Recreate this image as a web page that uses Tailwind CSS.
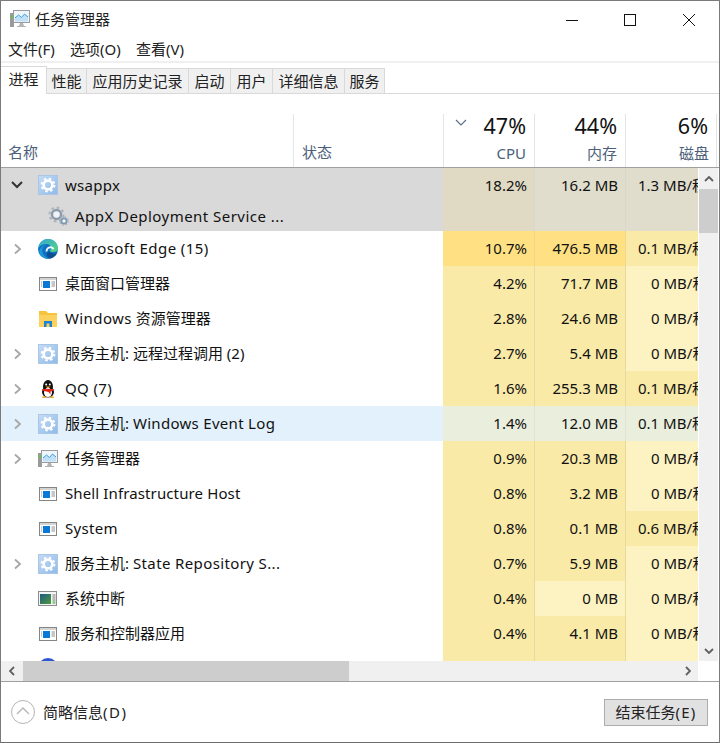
<!DOCTYPE html>
<html lang="zh-CN">
<head>
    <meta charset="UTF-8">
    <title>任务管理器</title>
    <script src="https://cdn.jsdelivr.net/npm/@tailwindcss/browser@4"></script>
</head>
<body class="bg-white">
    <svg width="0" height="0" class="absolute">
        <defs>
            <linearGradient id="tile" x1="0" y1="0" x2="1" y2="1">
                <stop offset="0" stop-color="#c5dcf5"/>
                <stop offset="1" stop-color="#8fbae8"/>
            </linearGradient>
            <linearGradient id="edge-top" x1="0" y1="0" x2="1" y2="1">
                <stop offset="0" stop-color="#2fa9d8"/>
                <stop offset="1" stop-color="#5ad67a"/>
            </linearGradient>
            <linearGradient id="irq" x1="0" y1="0" x2="1" y2="1">
                <stop offset="0" stop-color="#1d5a86"/>
                <stop offset="1" stop-color="#4f9a3c"/>
            </linearGradient>
            <symbol id="gear" viewBox="0 0 20 20">
                <rect x="0.5" y="0.5" width="19" height="19" fill="url(#tile)" stroke="#a9c6e6"/>
                <circle cx="10" cy="10" r="4.4" fill="none" stroke="#fff" stroke-width="2.6"/>
                <circle cx="10" cy="10" r="6.4" fill="none" stroke="#fff" stroke-width="2" stroke-dasharray="2.5 2.53"/>
            </symbol>
            <symbol id="window" viewBox="0 0 20 20">
                <rect x="1.5" y="3.5" width="17" height="13" fill="#fff" stroke="#858585"/>
                <rect x="2" y="4" width="16" height="2" fill="#d4d4d4"/>
                <rect x="5" y="7" width="7" height="7" fill="#0a78d7"/>
                <path d="M13.5 8h3.500M13.500 10h3.500M13.500 12h3.500M3 8h1M3 10h1M3 12h1" stroke="#8f8f8f" stroke-width="1"/>
            </symbol>
            <symbol id="irq-window" viewBox="0 0 20 20">
                <rect x="0.5" y="2.5" width="18" height="14" fill="#f4f4f4" stroke="#8c8c8c"/>
                <rect x="2" y="5" width="11" height="10" fill="url(#irq)"/>
                <path d="M14.5 6h3M14.5 8h3M14.5 10h3" stroke="#7a7a7a"/>
                <path d="M14.5 12h3M14.5 14h3" stroke="#3c9a3c"/>
            </symbol>
            <symbol id="edge" viewBox="0 0 20 20">
                <circle cx="10" cy="10" r="10" fill="#0f70c4"/>
                <path d="M0.3 9C1 4 5 0 10 0c5.5 0 10 4 10 9.5 0 2.5-2.5 3.5-5 3.5-2 0-3.3-.7-3.3-1.5 1-.8 1.300-1.500 1.300-2.500C13 6.500 11 5 8.500 5 5 5 2 6.500 0.300 9z" fill="url(#edge-top)"/>
                <path d="M9 5.500c-3 .5-4.800 3-4.800 6 0 4 3.300 7.500 7.500 8.300-4.500.5-8.500-1.500-10.200-5C.5 11 3.500 6 9 5.500z" fill="#1c9ad6"/>
                <path d="M8.500 12.500c0-2.500 1.800-4.300 4-4.300 1.600 0 2.500.8 2.800 2" fill="none" stroke="#f2fcff" stroke-width="1.900"/>
                <path d="M11.700 12.500c.2 1.300 2 2.200 4.800 2.200 1 0 1.800-.2 2.500-.6-1.300 2.700-3.500 4.500-6.500 5.500-2.200 0-4-2.600-3.500-5 .2-1 1-2 2.700-2.100z" fill="#0e4f94"/>
            </symbol>
            <symbol id="folder" viewBox="0 0 20 20">
                <path d="M1 2h7l2 2h9v14H1z" fill="#f7c23c"/>
                <path d="M1 6h18v12H1z" fill="#fbd25e"/>
                <path d="M6 18v-6h8v6h-2.500v-3.500h-3V18z" fill="#1d82d2"/>
            </symbol>
            <symbol id="qq" viewBox="0 0 20 20">
                <ellipse cx="10" cy="7.500" rx="5" ry="6.500" fill="#111"/>
                <ellipse cx="10" cy="13" rx="6" ry="5.500" fill="#111"/>
                <ellipse cx="10" cy="13.500" rx="4" ry="4.500" fill="#fff"/>
                <circle cx="8.200" cy="5.500" r="1" fill="#fff"/>
                <circle cx="11.800" cy="5.500" r="1" fill="#fff"/>
                <path d="M7.500 7.500h5L10 9.500z" fill="#f5b12b"/>
                <path d="M4.500 10h11l.5 1.500-3.500 1v3L10.500 13 4 11.500z" fill="#e3261c"/>
                <path d="M4 17.500h4.500l-1 1.500H4.500zM11.500 17.500H16l-.5 1.500h-3z" fill="#f5a623"/>
            </symbol>
            <symbol id="taskmgr" viewBox="0 0 20 20">
                <rect x="0" y="4" width="4" height="14" fill="#9a9a9a"/>
                <rect x="1" y="6" width="2" height="3" fill="#5fc24a"/>
                <rect x="3.500" y="1.500" width="16" height="12" fill="#eef6fc" stroke="#9c9c9c"/>
                <path d="M5 9l3.500-3 3 2.500 3-3.500L18 8v4.500H5z" fill="#bfe0f7"/>
                <path d="M5 9l3.500-3 3 2.500 3-3.500L18 8" fill="none" stroke="#3f9fe0" stroke-width="1"/>
                <path d="M10 14h3l1 3h2v1H7v-1h2z" fill="#b4b4b4"/>
            </symbol>
            <symbol id="svc-gears" viewBox="0 0 21 20">
                <circle cx="8.500" cy="8.500" r="4.500" fill="#eef3f8" stroke="#8f9aa6" stroke-width="2.400"/>
                <circle cx="8.500" cy="8.500" r="7" fill="none" stroke="#aab4be" stroke-width="2" stroke-dasharray="2.700 2.800"/>
                <circle cx="16" cy="15" r="2.600" fill="#f2f6fa" stroke="#7f97ad" stroke-width="1.800"/>
                <circle cx="16" cy="15" r="4.200" fill="none" stroke="#9fb2c4" stroke-width="1.200" stroke-dasharray="1.600 1.700"/>
            </symbol>
            <symbol id="chev-right" viewBox="0 0 10 12">
                <path d="M2 1.500L7 6l-5 4.500" fill="none" stroke="#a6a6a6" stroke-width="1.800"/>
            </symbol>
        </defs>
    </svg>

    <div class="w-[720px] h-[743px] border border-[#7a7a7a] border-b-[#6e6e6e] flex flex-col overflow-hidden text-[15px] text-[#111] font-['Noto_Sans','Noto_Sans_CJK_SC',sans-serif] leading-none">

        <!-- title bar -->
        <div class="h-[37px] shrink-0 flex items-center">
            <svg class="w-[20px] h-[20px] ml-[9px] mt-[-1px]"><use href="#taskmgr"/></svg>
            <span class="ml-[5px] text-[#222]">任务管理器</span>
            <div class="ml-auto flex items-center">
                <svg class="w-[12px] h-[12px] mr-[46px]" viewBox="0 0 12 12"><path d="M0 6.500h12" stroke="#111"/></svg>
                <svg class="w-[12px] h-[12px] mr-[47px]" viewBox="0 0 12 12"><rect x="0.500" y="0.500" width="11" height="11" fill="none" stroke="#111"/></svg>
                <svg class="w-[12px] h-[12px] mr-[24px]" viewBox="0 0 12 12"><path d="M0 0l12 12M12 0L0 12" stroke="#111"/></svg>
            </div>
        </div>

        <!-- menu -->
        <div class="h-[23px] shrink-0 flex items-center pl-[7px] text-[#222]">
            <span class="w-[62px]">文件(F)</span>
            <span class="w-[66px]">选项(O)</span>
            <span>查看(V)</span>
        </div>
        <div class="h-[2px] shrink-0 bg-[#f0f0f0]"></div>

        <!-- tabs -->
        <div class="h-[31px] shrink-0 flex items-end border-b border-[#d9d9d9] text-[#222]">
            <div class="w-[46px] h-[28px] mb-[-1px] bg-white border-t border-r border-[#d9d9d9] flex items-center justify-center pb-[2px]">进程</div>
            <div class="w-[40px] h-[25px] bg-[#f0f0f0] border-t border-r border-[#d9d9d9] flex items-center justify-center">性能</div>
            <div class="w-[102px] h-[25px] bg-[#f0f0f0] border-t border-r border-[#d9d9d9] flex items-center justify-center">应用历史记录</div>
            <div class="w-[42px] h-[25px] bg-[#f0f0f0] border-t border-r border-[#d9d9d9] flex items-center justify-center">启动</div>
            <div class="w-[42px] h-[25px] bg-[#f0f0f0] border-t border-r border-[#d9d9d9] flex items-center justify-center">用户</div>
            <div class="w-[72px] h-[25px] bg-[#f0f0f0] border-t border-r border-[#d9d9d9] flex items-center justify-center">详细信息</div>
            <div class="w-[40px] h-[25px] bg-[#f0f0f0] border-t border-r border-[#d9d9d9] flex items-center justify-center">服务</div>
        </div>

        <!-- column headers -->
        <div class="h-[74px] shrink-0 flex items-end border-b border-[#a0a0a0] text-[#4c607a]">
            <div class="w-[293px] h-[53px] border-r border-[#e5e5e5] flex items-end pl-[7px] pb-[7px]">名称</div>
            <div class="w-[150px] h-[53px] border-r border-[#e5e5e5] flex items-end pl-[8px] pb-[7px]">状态</div>
            <div class="w-[91px] h-[53px] border-r border-[#e5e5e5] flex flex-col items-end pr-[8px] relative">
                <svg class="absolute left-[11px] top-[5px] w-[12px] h-[7px]" viewBox="0 0 12 7"><path d="M1 1l5 5 5-5" fill="none" stroke="#5c6f88" stroke-width="1.200"/></svg>
                <span class="text-[21.500px] text-[#111] mt-[1px]">47%</span>
                <span class="mt-[9px]">CPU</span>
            </div>
            <div class="w-[91px] h-[53px] border-r border-[#e5e5e5] flex flex-col items-end pr-[8px]">
                <span class="text-[21.500px] text-[#111] mt-[1px]">44%</span>
                <span class="mt-[9px]">内存</span>
            </div>
            <div class="w-[91px] h-[53px] border-r border-[#e5e5e5] flex flex-col items-end pr-[8px]">
                <span class="text-[21.500px] text-[#111] mt-[1px]">6%</span>
                <span class="mt-[9px] mr-[-1px]">磁盘</span>
            </div>
        </div>

        <!-- table + vertical scrollbar -->
        <div class="h-[493px] shrink-0 flex">
            <div class="w-[697px] overflow-hidden whitespace-nowrap">

                <!-- selected group -->
                <div class="h-[63px] flex bg-[#d9d9d9]">
                    <div class="w-[442px]">
                        <div class="h-[33px] pt-[1px] flex items-center pl-[10px]">
                            <svg class="w-[12px] h-[8px]" viewBox="0 0 12 8"><path d="M1 1l5 5 5-5" fill="none" stroke="#333" stroke-width="2"/></svg>
                            <svg class="w-[20px] h-[20px] ml-[15px]"><use href="#gear"/></svg>
                            <span class="ml-[7px] tracking-[0.3px]">wsappx</span>
                        </div>
                        <div class="h-[30px] flex items-center pl-[47px]">
                            <svg class="w-[21px] h-[20px]"><use href="#svc-gears"/></svg>
                            <span class="ml-[6px] tracking-[0.46px]">AppX Deployment Service ...</span>
                        </div>
                    </div>
                    <div class="w-[92px] bg-[#e0dac4] border-r border-[#d8d8d0] flex justify-end pr-[7px] pt-[10px]">18.2%</div>
                    <div class="w-[91px] bg-[#e0ddcd] border-r border-[#d8d8d0] flex justify-end pr-[7px] pt-[10px]">16.2 MB</div>
                    <div class="w-[72px] bg-[#e0ddcd] pl-[12px] pt-[10px] overflow-hidden">1.3 MB/秒</div>
                </div>

                <div class="h-[35px] flex">
                    <div class="w-[442px] flex items-center pl-[12px]">
                        <svg class="w-[10px] h-[12px]"><use href="#chev-right"/></svg>
                        <svg class="w-[20px] h-[20px] ml-[15px]"><use href="#edge"/></svg>
                        <span class="ml-[7px] tracking-[0.42px]">Microsoft Edge (15)</span>
                    </div>
                    <div class="w-[92px] bg-[#ffe184] border-r border-[#f0d68c] flex items-center justify-end pr-[7px]">10.7%</div>
                    <div class="w-[91px] bg-[#ffe184] border-r border-[#f0d68c] flex items-center justify-end pr-[7px]">476.5 MB</div>
                    <div class="w-[72px] bg-[#f9eaa8] flex items-center pl-[12px] overflow-hidden">0.1 MB/秒</div>
                </div>

                <div class="h-[35px] flex">
                    <div class="w-[442px] flex items-center pl-[37px]">
                        <svg class="w-[20px] h-[20px]"><use href="#window"/></svg>
                        <span class="ml-[7px]">桌面窗口管理器</span>
                    </div>
                    <div class="w-[92px] bg-[#f9eaa8] border-r border-[#e8d9a0] flex items-center justify-end pr-[7px]">4.2%</div>
                    <div class="w-[91px] bg-[#f9eaa8] border-r border-[#e8d9a0] flex items-center justify-end pr-[7px]">71.7 MB</div>
                    <div class="w-[72px] bg-[#fdf3c2] flex items-center pl-[25px] overflow-hidden">0 MB/秒</div>
                </div>

                <div class="h-[35px] flex">
                    <div class="w-[442px] flex items-center pl-[37px]">
                        <svg class="w-[20px] h-[20px]"><use href="#folder"/></svg>
                        <span class="ml-[7px]"><span class="tracking-[0.4px]">Windows</span> 资源管理器</span>
                    </div>
                    <div class="w-[92px] bg-[#f9eaa8] border-r border-[#e8d9a0] flex items-center justify-end pr-[7px]">2.8%</div>
                    <div class="w-[91px] bg-[#f9eaa8] border-r border-[#e8d9a0] flex items-center justify-end pr-[7px]">24.6 MB</div>
                    <div class="w-[72px] bg-[#fdf3c2] flex items-center pl-[25px] overflow-hidden">0 MB/秒</div>
                </div>

                <div class="h-[35px] flex">
                    <div class="w-[442px] flex items-center pl-[12px]">
                        <svg class="w-[10px] h-[12px]"><use href="#chev-right"/></svg>
                        <svg class="w-[20px] h-[20px] ml-[15px]"><use href="#gear"/></svg>
                        <span class="ml-[7px]">服务主机: 远程过程调用 (2)</span>
                    </div>
                    <div class="w-[92px] bg-[#f9eaa8] border-r border-[#e8d9a0] flex items-center justify-end pr-[7px]">2.7%</div>
                    <div class="w-[91px] bg-[#f9eaa8] border-r border-[#e8d9a0] flex items-center justify-end pr-[7px]">5.4 MB</div>
                    <div class="w-[72px] bg-[#fdf3c2] flex items-center pl-[25px] overflow-hidden">0 MB/秒</div>
                </div>

                <div class="h-[35px] flex">
                    <div class="w-[442px] flex items-center pl-[12px]">
                        <svg class="w-[10px] h-[12px]"><use href="#chev-right"/></svg>
                        <svg class="w-[20px] h-[20px] ml-[15px]"><use href="#qq"/></svg>
                        <span class="ml-[7px] tracking-[0.35px]">QQ (7)</span>
                    </div>
                    <div class="w-[92px] bg-[#f9eaa8] border-r border-[#e8d9a0] flex items-center justify-end pr-[7px]">1.6%</div>
                    <div class="w-[91px] bg-[#f9eaa8] border-r border-[#e8d9a0] flex items-center justify-end pr-[7px]">255.3 MB</div>
                    <div class="w-[72px] bg-[#f9eaa8] flex items-center pl-[12px] overflow-hidden">0.1 MB/秒</div>
                </div>

                <!-- hovered row -->
                <div class="h-[35px] flex">
                    <div class="w-[442px] bg-[#e3f1fc] flex items-center pl-[12px]">
                        <svg class="w-[10px] h-[12px]"><use href="#chev-right"/></svg>
                        <svg class="w-[20px] h-[20px] ml-[15px]"><use href="#gear"/></svg>
                        <span class="ml-[7px]">服务主机: <span class="tracking-[0.3px]">Windows Event Log</span></span>
                    </div>
                    <div class="w-[92px] bg-[#eaeedd] border-r border-[#e0e4d4] flex items-center justify-end pr-[7px]">1.4%</div>
                    <div class="w-[91px] bg-[#eaeedd] border-r border-[#e0e4d4] flex items-center justify-end pr-[7px]">12.0 MB</div>
                    <div class="w-[72px] bg-[#eaeedd] flex items-center pl-[12px] overflow-hidden">0.1 MB/秒</div>
                </div>

                <div class="h-[35px] flex">
                    <div class="w-[442px] flex items-center pl-[12px]">
                        <svg class="w-[10px] h-[12px]"><use href="#chev-right"/></svg>
                        <svg class="w-[20px] h-[20px] ml-[15px]"><use href="#taskmgr"/></svg>
                        <span class="ml-[7px]">任务管理器</span>
                    </div>
                    <div class="w-[92px] bg-[#f9eaa8] border-r border-[#e8d9a0] flex items-center justify-end pr-[7px]">0.9%</div>
                    <div class="w-[91px] bg-[#f9eaa8] border-r border-[#e8d9a0] flex items-center justify-end pr-[7px]">20.3 MB</div>
                    <div class="w-[72px] bg-[#fdf3c2] flex items-center pl-[25px] overflow-hidden">0 MB/秒</div>
                </div>

                <div class="h-[35px] flex">
                    <div class="w-[442px] flex items-center pl-[37px]">
                        <svg class="w-[20px] h-[20px]"><use href="#window"/></svg>
                        <span class="ml-[7px] tracking-[0.12px]">Shell Infrastructure Host</span>
                    </div>
                    <div class="w-[92px] bg-[#f9eaa8] border-r border-[#e8d9a0] flex items-center justify-end pr-[7px]">0.8%</div>
                    <div class="w-[91px] bg-[#f9eaa8] border-r border-[#e8d9a0] flex items-center justify-end pr-[7px]">3.2 MB</div>
                    <div class="w-[72px] bg-[#fdf3c2] flex items-center pl-[25px] overflow-hidden">0 MB/秒</div>
                </div>

                <div class="h-[35px] flex">
                    <div class="w-[442px] flex items-center pl-[37px]">
                        <svg class="w-[20px] h-[20px]"><use href="#window"/></svg>
                        <span class="ml-[7px] tracking-[0.3px]">System</span>
                    </div>
                    <div class="w-[92px] bg-[#f9eaa8] border-r border-[#e8d9a0] flex items-center justify-end pr-[7px]">0.8%</div>
                    <div class="w-[91px] bg-[#f9eaa8] border-r border-[#e8d9a0] flex items-center justify-end pr-[7px]">0.1 MB</div>
                    <div class="w-[72px] bg-[#f9eaa8] flex items-center pl-[12px] overflow-hidden">0.6 MB/秒</div>
                </div>

                <div class="h-[35px] flex">
                    <div class="w-[442px] flex items-center pl-[12px]">
                        <svg class="w-[10px] h-[12px]"><use href="#chev-right"/></svg>
                        <svg class="w-[20px] h-[20px] ml-[15px]"><use href="#gear"/></svg>
                        <span class="ml-[7px]">服务主机: <span class="tracking-[0.38px]">State Repository S...</span></span>
                    </div>
                    <div class="w-[92px] bg-[#f9eaa8] border-r border-[#e8d9a0] flex items-center justify-end pr-[7px]">0.7%</div>
                    <div class="w-[91px] bg-[#f9eaa8] border-r border-[#e8d9a0] flex items-center justify-end pr-[7px]">5.9 MB</div>
                    <div class="w-[72px] bg-[#fdf3c2] flex items-center pl-[25px] overflow-hidden">0 MB/秒</div>
                </div>

                <div class="h-[35px] flex">
                    <div class="w-[442px] flex items-center pl-[37px]">
                        <svg class="w-[20px] h-[20px]"><use href="#irq-window"/></svg>
                        <span class="ml-[7px]">系统中断</span>
                    </div>
                    <div class="w-[92px] bg-[#f9eaa8] border-r border-[#e8d9a0] flex items-center justify-end pr-[7px]">0.4%</div>
                    <div class="w-[91px] bg-[#fdf3c2] border-r border-[#e8d9a0] flex items-center justify-end pr-[7px]">0 MB</div>
                    <div class="w-[72px] bg-[#fdf3c2] flex items-center pl-[25px] overflow-hidden">0 MB/秒</div>
                </div>

                <div class="h-[35px] flex">
                    <div class="w-[442px] flex items-center pl-[37px]">
                        <svg class="w-[20px] h-[20px]"><use href="#window"/></svg>
                        <span class="ml-[7px]">服务和控制器应用</span>
                    </div>
                    <div class="w-[92px] bg-[#f9eaa8] border-r border-[#e8d9a0] flex items-center justify-end pr-[7px]">0.4%</div>
                    <div class="w-[91px] bg-[#f9eaa8] border-r border-[#e8d9a0] flex items-center justify-end pr-[7px]">4.1 MB</div>
                    <div class="w-[72px] bg-[#fdf3c2] flex items-center pl-[25px] overflow-hidden">0 MB/秒</div>
                </div>

                <!-- row cut off by the scroll area -->
                <div class="h-[35px] flex">
                    <div class="w-[442px] flex items-start pl-[37px] pt-[7px]">
                        <div class="w-[20px] h-[20px] rounded-full bg-[#2f55d4]"></div>
                    </div>
                    <div class="w-[92px] bg-[#f9eaa8] border-r border-[#e8d9a0]"></div>
                    <div class="w-[91px] bg-[#f9eaa8] border-r border-[#e8d9a0]"></div>
                    <div class="w-[72px] bg-[#fdf3c2]"></div>
                </div>
            </div>

            <!-- vertical scrollbar -->
            <div class="w-[19px] bg-[#f0f0f0] flex flex-col ml-[1px]">
                <div class="h-[21px] shrink-0 flex items-center justify-center">
                    <svg class="w-[10px] h-[6px]" viewBox="0 0 10 6"><path d="M1 5l4-4 4 4" fill="none" stroke="#606060" stroke-width="1.800"/></svg>
                </div>
                <div class="h-[44px] shrink-0 bg-[#cdcdcd]"></div>
                <div class="mt-auto h-[21px] shrink-0 flex items-center justify-center">
                    <svg class="w-[10px] h-[6px]" viewBox="0 0 10 6"><path d="M1 1l4 4 4-4" fill="none" stroke="#606060" stroke-width="1.800"/></svg>
                </div>
            </div>
        </div>

        <!-- horizontal scrollbar -->
        <div class="h-[20px] shrink-0 flex">
            <div class="w-[697px] bg-[#f0f0f0] flex items-stretch">
                <div class="w-[22px] flex items-center justify-center">
                    <svg class="w-[6px] h-[10px]" viewBox="0 0 6 10"><path d="M5 1L1 5l4 4" fill="none" stroke="#606060" stroke-width="1.800"/></svg>
                </div>
                <div class="w-[326px] bg-[#cdcdcd]"></div>
                <div class="ml-auto w-[21px] flex items-center justify-center">
                    <svg class="w-[6px] h-[10px]" viewBox="0 0 6 10"><path d="M1 1l4 4-4 4" fill="none" stroke="#606060" stroke-width="1.800"/></svg>
                </div>
            </div>
        </div>

        <!-- footer -->
        <div class="flex-1 border-t border-[#a0a0a0] flex items-center pl-[10px] pr-[11px]">
            <svg class="w-[24px] h-[24px]" viewBox="0 0 24 24"><circle cx="12" cy="12" r="11.500" fill="none" stroke="#b4b4b4"/><path d="M6 14l6-6 6 6" fill="none" stroke="#b4b4b4" stroke-width="1.300"/></svg>
            <span class="ml-[8px] text-[#222]">简略信息<span class="tracking-[1.5px]">(D)</span></span>
            <button class="ml-auto w-[104px] h-[27px] bg-[#e1e1e1] border border-[#adadad] text-[#222] text-[15px]">结束任务<span class="tracking-[1.2px]">(E)</span></button>
        </div>
    </div>
</body>
</html>
